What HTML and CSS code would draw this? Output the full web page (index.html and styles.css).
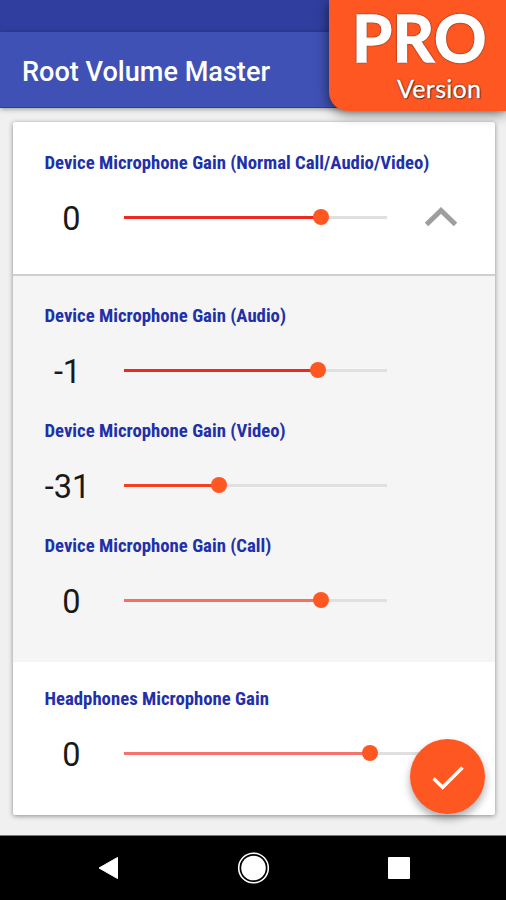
FILE: index.html
```html
<!DOCTYPE html>
<html lang="en">
<head>
<meta charset="utf-8">
<title>Root Volume Master</title>
<link rel="stylesheet" href="styles.css">
</head>
<body>
<div class="status-bar"></div>
<header class="app-bar"><h1 class="app-title">Root Volume Master</h1></header>
<div class="pro-badge">
  <div class="pro-title">PRO</div>
  <div class="pro-sub">Version</div>
</div>
<main class="content">
  <div class="card">
    <section class="main-gain">
      <div class="setting">
        <div class="label">Device Microphone Gain (Normal Call/Audio/Video)</div>
        <div class="row">
          <div class="value">0</div>
          <div class="slider"><div class="fill strong" style="width:75%"></div><div class="thumb"></div></div>
          <svg class="chevron" width="34" height="22" viewBox="0 0 34 22"><path d="M2.500 18.500 17 4.500 31.500 18.500" fill="none" stroke="#9e9e9e" stroke-width="5"/></svg>
        </div>
      </div>
    </section>
    <section class="sub-gains">
      <div class="setting">
        <div class="label">Device Microphone Gain (Audio)</div>
        <div class="row">
          <div class="value negative">-1</div>
          <div class="slider"><div class="fill strong" style="width:73.900%"></div><div class="thumb"></div></div>
        </div>
      </div>
      <div class="setting">
        <div class="label">Device Microphone Gain (Video)</div>
        <div class="row">
          <div class="value negative">-31</div>
          <div class="slider"><div class="fill medium" style="width:36.200%"></div><div class="thumb"></div></div>
        </div>
      </div>
      <div class="setting">
        <div class="label">Device Microphone Gain (Call)</div>
        <div class="row">
          <div class="value">0</div>
          <div class="slider"><div class="fill soft" style="width:75%"></div><div class="thumb"></div></div>
        </div>
      </div>
    </section>
    <section class="headphones">
      <div class="setting">
        <div class="label">Headphones Microphone Gain</div>
        <div class="row">
          <div class="value">0</div>
          <div class="slider wide"><div class="fill softer" style="width:75%"></div><div class="thumb"></div></div>
        </div>
      </div>
    </section>
  </div>
</main>
<div class="fab"><svg width="34" height="26" viewBox="0 0 34 26"><path d="M2.500 14.500 11.700 23.300 31.500 3.500" fill="none" stroke="#fff" stroke-width="3.400"/></svg></div>
<nav class="nav-bar">
  <svg class="nav-icon" width="34" height="34" viewBox="0 0 34 34"><path d="M9 17 27.500 6.500V27.500Z" fill="#fff" stroke="#fff" stroke-linejoin="round"/></svg>
  <svg class="nav-icon" width="34" height="34" viewBox="0 0 34 34"><circle cx="17.500" cy="17" r="14.800" fill="none" stroke="#fff" stroke-width="1.600"/><circle cx="17.500" cy="17" r="12.300" fill="#fff"/></svg>
  <svg class="nav-icon" width="34" height="34" viewBox="0 0 34 34"><rect x="6" y="6" width="22" height="22" rx="1" fill="#fff"/></svg>
</nav>
</body>
</html>
```

FILE: styles.css
```css
* { box-sizing: border-box; }
body {
  margin: 0;
  width: 506px;
  height: 900px;
  display: flex;
  flex-direction: column;
  position: relative;
  overflow: hidden;
  background: #f0f0f0;
  font-family: Roboto, sans-serif;
}
.status-bar { height: 32px; background: #303f9f; }
.app-bar {
  height: 76px;
  padding: 4px 22px 0;
  display: flex;
  align-items: center;
  background: #3f51b5;
  border-bottom: 1px solid #2c3c9c;
  box-shadow: 0 1px 5px rgba(0, 0, 0, .4);
}
.app-title { margin: 0; font-size: 27.100px; line-height: 32px; font-weight: 500; color: #fff; }
.pro-badge {
  position: absolute;
  top: 0;
  right: 0;
  width: 177px;
  height: 111px;
  border-radius: 0 0 0 19px;
  background: #ff5722;
  box-shadow: 0 2px 13px rgba(0, 0, 0, .6);
  color: #fff;
  font-family: Lato, sans-serif;
}
.pro-title {
  padding-left: 23px;
  font-size: 65px;
  line-height: 75px;
  font-weight: 700;
  letter-spacing: .3px;
  -webkit-text-stroke: 1.400px #fff;
  text-shadow: 0 0 2px #000, 0 0 2px #000;
}
.pro-sub {
  padding-left: 68px;
  font-size: 25px;
  line-height: 27px;
  letter-spacing: .3px;
  -webkit-text-stroke: .4px #fff;
  text-shadow: 0 0 2px #000, 1px 1px 1px rgba(0, 0, 0, .5);
}
.content { flex: 1; padding: 14px 11.500px 20px 12.500px; }
.card { height: 693px; background: #fff; border-radius: 2px; box-shadow: 0 1px 5px rgba(0, 0, 0, .42); }
.main-gain { height: 154px; padding: 31px 32px 0; border-bottom: 2px solid #cfcfcf; }
.sub-gains { height: 386px; padding: 30px 32px 0; display: flex; flex-direction: column; gap: 21px; background: #f5f5f5; }
.headphones { padding: 27px 32px 0; }
.setting { display: flex; flex-direction: column; gap: 14px; }
.label { height: 20px; line-height: 20px; font-size: 18.750px; font-weight: 700; font-stretch: 75%; color: #2130a8; white-space: nowrap; }
.row { height: 60px; display: flex; align-items: center; }
.value { width: 54px; padding-top: 4px; margin-right: 25px; font-size: 32.500px; line-height: 38px; text-align: center; color: #191919; }
.negative { padding-right: 8px; }
.slider { width: 263px; height: 3px; display: flex; align-items: center; background: #e0e0e0; }
.slider.wide { width: 328px; }
.fill { height: 3px; flex: none; }
.strong { background: #ee2a20; }
.medium { background: #f5401f; }
.soft { background: #f8705c; }
.softer { background: #f4736b; }
.thumb { width: 16px; height: 16px; margin-left: -8px; flex: none; border-radius: 50%; background: #ff5722; }
.chevron { margin-left: 37px; }
.fab {
  position: absolute;
  left: 410px;
  top: 739px;
  width: 75px;
  height: 75px;
  display: flex;
  align-items: center;
  justify-content: center;
  border-radius: 50%;
  background: #ff5722;
  box-shadow: 0 5px 9px rgba(0, 0, 0, .33);
}
.nav-bar { height: 65px; flex: none; padding: 0 90px; display: flex; align-items: center; justify-content: space-between; background: #000; border-top: 1px solid #777; }
```
